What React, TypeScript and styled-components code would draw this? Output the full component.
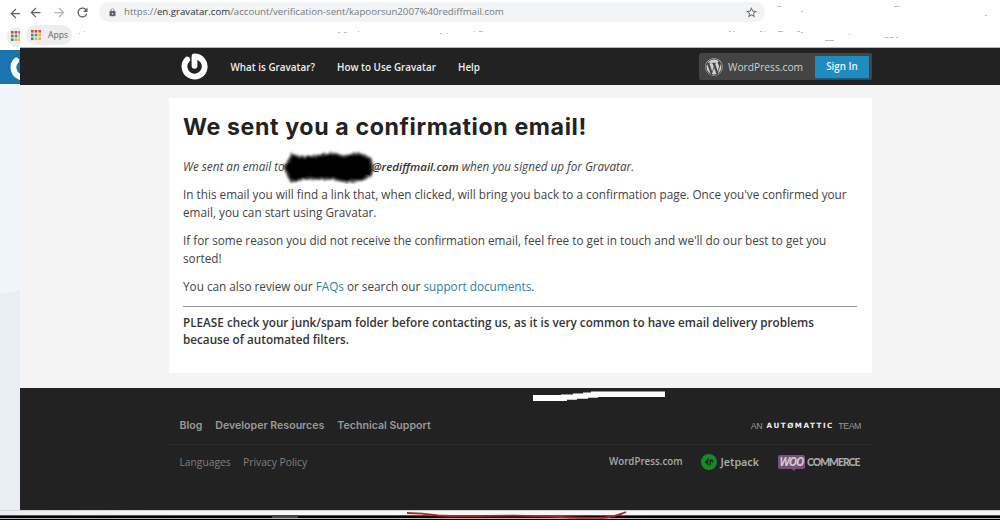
import React from 'react';
import styled, { createGlobalStyle } from 'styled-components';
import { FaWordpress } from 'react-icons/fa';
import { MdArrowBack, MdArrowForward, MdLock, MdRefresh, MdStarBorder } from 'react-icons/md';

const GlobalStyle = createGlobalStyle`
  * {
    box-sizing: border-box;
  }
  body {
    margin: 0;
    background: #fff;
    font-family: 'Open Sans', sans-serif;
  }
`;

const appColors = ['#dc4437', '#dc4437', '#d9544a', '#2f9e5b', '#4a86d8', '#f0b02c', '#2f9e5b', '#f0b02c', '#f0b02c'];

const AppsGrid = () => (
  <Icon width="10" height="10" viewBox="0 0 10 10">
    {appColors.map((color, i) => (
      <rect key={i} x={(i % 3) * 3.7} y={Math.floor(i / 3) * 3.7} width="2.6" height="2.6" fill={color} />
    ))}
  </Icon>
);

const GravatarLogo = () => (
  <Icon width="27" height="27" viewBox="0 0 27 27" fill="none">
    <path
      d="M13.5 12.8V3.4A10.1 10.1 0 1 1 6.3 6.5"
      stroke="#fff"
      strokeWidth="5.8"
      strokeLinecap="round"
      strokeLinejoin="round"
    />
  </Icon>
);

const JetpackLogo = () => (
  <Icon width="16" height="16" viewBox="0 0 16 16">
    <circle cx="8" cy="8" r="8" fill="#158a26" />
    <path d="M7.4 3.4V11.2L6 10.8V9.7L4 9.1C3.6 8.9 3.6 8.5 3.8 8.1Z" fill="#1c2a1d" />
    <path d="M8.5 12.7V5.2L11.9 6.1C12.5 6.4 12.4 6.9 12.2 7.3L11 9.7L10.8 7.7L9.9 7.5V10.4Z" fill="#1c2a1d" />
  </Icon>
);

const Redaction = () => (
  <Scribble width="96" height="34" viewBox="0 0 96 34">
    <defs>
      <filter id="rough" x="-5%" y="-10%" width="110%" height="120%">
        <feTurbulence type="fractalNoise" baseFrequency="0.35" numOctaves="2" seed="4" />
        <feDisplacementMap in="SourceGraphic" scale="4" />
        <feGaussianBlur stdDeviation="0.8" />
      </filter>
    </defs>
    <path
      filter="url(#rough)"
      d="M3 18L11 4L19 7L33 6L51 3L63 6L77 3L90 8L92 19L90 26L81 30L65 32L51 29L37 29L23 29L10 32Z"
      stroke="#555"
      strokeWidth="1.5"
    />
  </Scribble>
);

// leftovers of the erased tabs and bookmarks: x, y, width
const specks = [
  [79, 33, 1], [84, 31, 1], [338, 32, 2], [344, 32, 3], [358, 31, 1], [440, 33, 2], [447, 33, 1],
  [474, 31, 1], [479, 31, 4], [729, 31, 2], [733, 31, 1], [760, 31, 2], [764, 31, 1], [778, 31, 5],
  [797, 31, 3], [801, 32, 2], [777, 6, 4], [801, 11, 2], [894, 6, 5], [985, 15, 2], [849, 34, 1],
  [825, 40, 9], [885, 37, 3], [889, 37, 5], [896, 37, 2],
];

const BrowserBar = () => (
  <Toolbar>
    <AddressRow>
      <NavIcons>
        <MdArrowBack size={15} />
        <MdArrowForward size={15} color="#b4b4b4" />
        <MdRefresh size={15} />
      </NavIcons>
      <AddressBar>
        <MdLock size={9} />
        <Url>
          https://<b>en.gravatar.com</b>/account/verification-sent/kapoorsun2007%40rediffmail.com
        </Url>
        <MdStarBorder size={13} />
      </AddressBar>
    </AddressRow>
    <AppsChip>
      <AppsGrid />
      Apps
    </AppsChip>
    <Specks width="980" height="48" viewBox="20 0 980 48">
      {specks.map(([x, y, width], i) => (
        <rect key={i} x={x} y={y} width={width} height="0.8" fill="#aaa" />
      ))}
    </Specks>
  </Toolbar>
);

const Header = () => (
  <HeaderBar>
    <HeaderInner>
      <GravatarLogo />
      <HeaderNav>
        <span>What is Gravatar?</span>
        <span>How to Use Gravatar</span>
        <span>Help</span>
      </HeaderNav>
      <Account>
        <FaWordpress size={18} />
        <AccountName>WordPress.com</AccountName>
        <SignIn>Sign In</SignIn>
      </Account>
    </HeaderInner>
  </HeaderBar>
);

const Confirmation = () => (
  <Card>
    <Title>We sent you a confirmation email!</Title>
    <Lead>
      We sent an email to
      <Hidden>
        <Redaction />
      </Hidden>
      <b>@rediffmail.com</b> when you signed up for Gravatar.
    </Lead>
    <Text>
      In this email you will find a link that, when clicked, will bring you back to a confirmation page. Once you've confirmed your
      <br />
      email, you can start using Gravatar.
    </Text>
    <Text>
      If for some reason you did not receive the confirmation email, feel free to get in touch and we'll do our best to get you
      <br />
      sorted!
    </Text>
    <Text>
      You can also review our <Link>FAQs</Link> or search our <Link>support documents</Link>.
    </Text>
    <Rule />
    <Notice>
      PLEASE check your junk/spam folder before contacting us, as it is very common to have email delivery problems
      <br />
      because of automated filters.
    </Notice>
  </Card>
);

const Footer = () => (
  <FooterBar>
    <Stroke width="132" height="11" viewBox="0 0 132 11">
      <path d="M0 4H28V3.5H40V2.5H50V1.5H58V0.5H132V6H65V6.8H55V7.8H44V8.8H34V10H0Z" fill="#fff" />
    </Stroke>
    <FooterTop>
      <MainLinks>
        <span>Blog</span>
        <span>Developer Resources</span>
        <span>Technical Support</span>
      </MainLinks>
      <Team>
        AN <Automattic>AUTØMATTIC</Automattic> TEAM
      </Team>
    </FooterTop>
    <FooterBottom>
      <SmallLinks>
        <span>Languages</span>
        <span>Privacy Policy</span>
      </SmallLinks>
      <Brands>
        <BrandName>WordPress.com</BrandName>
        <Jetpack>
          <JetpackLogo />
          Jetpack
        </Jetpack>
        <Woo>
          <WooBadge>WOO</WooBadge>
          <WooName>COMMERCE</WooName>
        </Woo>
      </Brands>
    </FooterBottom>
  </FooterBar>
);

const App = () => (
  <Screen>
    <GlobalStyle />
    <Windows>
      <BackWindow>
        <BackToolbar>
          <MdArrowBack size={15} />
          <BackChip>
            <AppsGrid />
          </BackChip>
        </BackToolbar>
        <BackHeader>
          <GravatarLogo />
        </BackHeader>
        <BackPage />
      </BackWindow>
      <FrontWindow>
        <BrowserBar />
        <Header />
        <Page>
          <Confirmation />
        </Page>
        <Footer />
      </FrontWindow>
    </Windows>
    <Desk>
      <Taskbar>
        <TaskItem />
      </Taskbar>
      <RedMark width="222" height="8" viewBox="0 0 222 8">
        <path
          d="M1 2C14 2 22 3 32 4.5C60 6.5 90 4 120 4.8C155 5.6 185 8 200 6.5C210 5.5 214 3 220 1"
          fill="none"
          stroke="#b3201d"
          strokeWidth="1.8"
        />
      </RedMark>
    </Desk>
  </Screen>
);

export default App;

const Icon = styled.svg`
  display: block;
  flex: none;
`;

const Screen = styled.div`
  display: flex;
  flex-direction: column;
  width: 1000px;
  height: 520px;
  overflow: hidden;
`;

const Windows = styled.div`
  display: flex;
  height: 510px;
`;

const BackWindow = styled.div`
  display: flex;
  flex-direction: column;
  width: 20px;
  overflow: hidden;
`;

const BackToolbar = styled.div`
  height: 50px;
  padding: 6px 0 0 8px;
  color: #5f6368;
  svg {
    display: block;
  }
`;

const BackChip = styled.div`
  width: 46px;
  height: 20px;
  margin: 6px 0 0 -1px;
  padding: 4px;
  border-radius: 10px;
  background: #ededed;
`;

const BackHeader = styled.div`
  height: 34px;
  padding: 4px 0 0 10px;
  background: #1a74ae;
`;

const BackPage = styled.div`
  flex: 1;
  background: linear-gradient(168deg, #f0f5f9 205px, #e8eef3 206px);
`;

const FrontWindow = styled.div`
  display: flex;
  flex-direction: column;
  width: 980px;
`;

const Toolbar = styled.div`
  position: relative;
  height: 48px;
  padding: 2px 0 0 6px;
  border-bottom: 1px solid #b5b7b7;
  color: #5f6368;
`;

const Specks = styled.svg`
  position: absolute;
  top: 0;
  left: 0;
`;

const AddressRow = styled.div`
  display: flex;
  align-items: center;
  height: 20px;
`;

const NavIcons = styled.div`
  display: flex;
  gap: 8.5px;
  width: 73px;
  padding-left: 2px;
`;

const AddressBar = styled.div`
  display: flex;
  align-items: center;
  width: 666px;
  height: 20px;
  padding: 0 7px 0 8.5px;
  border-radius: 10px;
  background: #f1f3f4;
`;

const Url = styled.div`
  flex: 1;
  margin-left: 7.5px;
  font-size: 9.67px;
  line-height: 20px;
  color: #757b80;
  b {
    font-weight: 400;
    color: #303236;
  }
`;

const AppsChip = styled.div`
  display: flex;
  align-items: center;
  gap: 7px;
  width: 46px;
  height: 20px;
  margin-top: 3px;
  padding-left: 5px;
  border-radius: 10px;
  background: #ededed;
  font-size: 8.6px;
`;

const HeaderBar = styled.div`
  height: 37px;
  background: #222;
`;

const HeaderInner = styled.div`
  display: flex;
  align-items: center;
  width: 704px;
  height: 37px;
  margin-left: 148px;
  padding-left: 12.5px;
`;

const HeaderNav = styled.div`
  display: flex;
  gap: 22px;
  flex: 1;
  padding-left: 23px;
  font-size: 9.88px;
  font-weight: 600;
  color: #eee;
`;

const Account = styled.div`
  display: flex;
  align-items: center;
  width: 173px;
  height: 27px;
  padding: 0 3px 0 6px;
  border-radius: 2px;
  background: #444;
  color: #d0d0d0;
`;

const AccountName = styled.span`
  flex: 1;
  padding-left: 5px;
  font-size: 10.22px;
`;

const SignIn = styled.div`
  width: 54px;
  height: 22px;
  border-radius: 1px;
  background: #1e8cbe;
  box-shadow: 0 1px 1px #14618a;
  font-size: 9.8px;
  font-weight: 600;
  line-height: 22px;
  text-align: center;
  color: #eef6fa;
`;

const Page = styled.div`
  height: 303px;
  padding: 13px 0 0 149px;
  background: #f4f4f4;
`;

const Card = styled.div`
  width: 703px;
  height: 275px;
  padding: 14px 15px 0 14px;
  background: #fff;
  font-size: 11.75px;
  line-height: 17.6px;
  color: #444;
  white-space: nowrap;
`;

const Title = styled.h1`
  margin: 0 0 16.4px;
  font-family: Inter, sans-serif;
  font-size: 23.2px;
  font-weight: 700;
  line-height: 30px;
  letter-spacing: 0.6px;
  color: #222;
`;

const Text = styled.p`
  margin: 0 0 10.4px;
`;

const Lead = styled(Text)`
  font-size: 11.7px;
  font-style: italic;
  b {
    font-size: 11.55px;
    font-weight: 600;
    color: #333;
  }
`;

const Hidden = styled.span`
  position: relative;
  display: inline-block;
  width: 87px;
`;

const Scribble = styled.svg`
  position: absolute;
  top: -21px;
  left: -4px;
`;

const Link = styled.a`
  color: #2d7fa0;
`;

const Rule = styled.hr`
  height: 1px;
  margin: 10.4px 0 7px;
  border: none;
  background: #939393;
`;

const Notice = styled(Text)`
  font-size: 11.73px;
  font-weight: 600;
  color: #333;
`;

const FooterBar = styled.div`
  position: relative;
  height: 122px;
  padding: 18px 0 0 148px;
  background: #222;
  color: #999;
  white-space: nowrap;
`;

const Stroke = styled.svg`
  position: absolute;
  top: 3px;
  left: 513px;
`;

const FooterTop = styled.div`
  display: flex;
  align-items: center;
  justify-content: space-between;
  width: 704px;
  height: 39px;
  padding: 0 11px 0 11.5px;
  border-bottom: 1px solid #2d2d2d;
`;

const MainLinks = styled.div`
  display: flex;
  gap: 13px;
  font-family: Inter, sans-serif;
  font-size: 10.6px;
  font-weight: 600;
`;

const Team = styled.div`
  display: flex;
  align-items: center;
  gap: 4.5px;
  padding-top: 1px;
  font-family: 'Liberation Sans', sans-serif;
  font-size: 8.8px;
  letter-spacing: -0.45px;
`;

const Automattic = styled.span`
  font-family: 'DejaVu Sans', sans-serif;
  font-size: 7.2px;
  font-weight: 700;
  letter-spacing: 1.5px;
  color: #eee;
`;

const FooterBottom = styled.div`
  display: flex;
  align-items: center;
  justify-content: space-between;
  width: 704px;
  height: 34px;
  padding: 0 12px 0 11.5px;
`;

const SmallLinks = styled.div`
  display: flex;
  gap: 12.5px;
  font-size: 10.26px;
  color: #808080;
`;

const Brands = styled.div`
  display: flex;
  align-items: center;
  padding-bottom: 1px;
  color: #aaa;
`;

const BrandName = styled.span`
  font-size: 9.75px;
  font-weight: 600;
`;

const Jetpack = styled.div`
  display: flex;
  align-items: center;
  gap: 4px;
  margin: 0 19px 0 18px;
  font-family: 'Noto Sans', sans-serif;
  font-size: 10.7px;
  font-weight: 600;
  line-height: 14px;
`;

const Woo = styled.div`
  display: flex;
  align-items: center;
  gap: 2px;
`;

const WooName = styled.span`
  width: 53px;
  font-family: Lato, sans-serif;
  font-size: 10.4px;
  font-weight: 900;
  line-height: 14px;
  letter-spacing: -0.98px;
`;

const WooBadge = styled.span`
  position: relative;
  width: 27px;
  height: 14px;
  border-radius: 2px;
  background: #79507a;
  font-size: 11.5px;
  font-style: italic;
  font-weight: 700;
  line-height: 14px;
  letter-spacing: -1.1px;
  text-align: center;
  color: #ccc;
  &::after {
    content: '';
    position: absolute;
    top: 14px;
    left: 13px;
    border-top: 2px solid #79507a;
    border-left: 4px solid transparent;
  }
`;

const Desk = styled.div`
  position: relative;
  display: flex;
  flex-direction: column;
  justify-content: flex-end;
  height: 10px;
  border-top: 1px solid #d4d4d4;
  background: linear-gradient(90deg, #e8eef3, #f6f7f8 180px);
`;

const Taskbar = styled.div`
  height: 5px;
  padding-left: 272px;
  background: linear-gradient(#555 1px, #000 1px 3px, #b5b5b5 3px 4px, #000 4px);
`;

const TaskItem = styled.div`
  width: 26px;
  height: 3px;
  background: #444;
`;

const RedMark = styled.svg`
  position: absolute;
  top: 0;
  left: 406px;
`;
